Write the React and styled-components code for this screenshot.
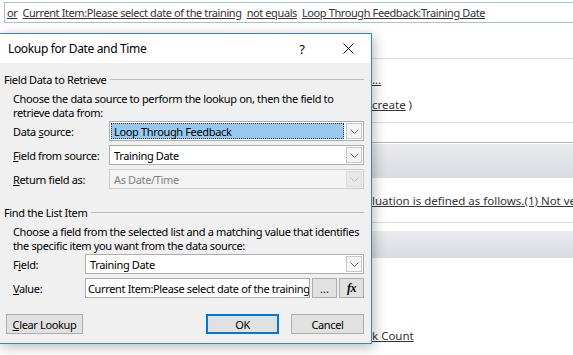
import styled, { createGlobalStyle } from "styled-components";

const FONT = `"Noto Sans", "Open Sans", sans-serif`;

const GlobalStyle = createGlobalStyle`
  html, body {
    margin: 0;
    padding: 0;
    background: #ffffff;
    overflow: hidden;
  }
  body {
    font-family: ${FONT};
    font-size: 11px;
    letter-spacing: -0.35px;
    color: #000;
  }
`;

// Background page (the workflow editor behind the dialog)
const Page = styled.div`
  position: relative;
  width: 573px;
  height: 355px;
  overflow: hidden;
  background: #fff;
`;

const ConditionBar = styled.div`
  margin: 2px 0 0 4px;
  height: 19px;
  border: 1px solid #a9bfd6;
  border-right: none;
  padding-left: 2px;
  display: flex;
  align-items: center;
  gap: 5px;
  font-size: 11px;
  letter-spacing: -0.4px;
  color: #333;
  white-space: nowrap;
`;

const Link = styled.span`
  text-decoration: underline;
  color: #333;
`;

const Divider = styled.div`
  height: 1px;
  margin-top: ${(p) => p.$top}px;
  background: ${(p) => (p.$dark ? "#b4b4b4" : "#dadada")};
`;

const Band = styled.div`
  height: ${(p) => p.$h}px;
  margin-top: ${(p) => p.$top}px;
  background: linear-gradient(#e9ebee, #d9dce1);
  border-top: 1px solid #fff;
`;

const BgRow = styled.div`
  display: grid;
  grid-template-columns: 372px minmax(0, 1fr);
  height: 20px;
  line-height: 20px;
  margin-top: ${(p) => p.$top}px;
  font-size: 11.5px;
  letter-spacing: 0;
  color: #333;
  white-space: nowrap;
`;

const Hidden = styled.div`
  overflow: hidden;
  text-align: right;
`;

const Shown = styled.div`
  overflow: hidden;
`;

// Dialog window
const Window = styled.div`
  position: absolute;
  left: -1px;
  top: 33px;
  width: 371px;
  height: 309px;
  border: 1px solid #2b86d6;
  background: #f0f0f0;
  box-shadow: 2px 3px 12px rgba(0, 0, 0, 0.28);
  display: flex;
  flex-direction: column;
`;

const TitleBar = styled.div`
  height: 29px;
  background: #fff;
  display: flex;
  align-items: center;
  padding-left: 8px;
  font-size: 12px;
`;

const Title = styled.div`
  flex: 1;
`;

const TitleButton = styled.div`
  width: 46px;
  height: 29px;
  display: flex;
  align-items: center;
  justify-content: center;
  font-size: 13px;
`;

const Body = styled.div`
  padding: 8px 7px 8px 4px;
  display: flex;
  flex-direction: column;
`;

const GroupHeader = styled.div`
  display: flex;
  align-items: center;
  gap: 4px;
  height: 16px;
  margin-top: ${(p) => p.$top || 0}px;
  white-space: nowrap;

  &::after {
    content: "";
    flex: 1;
    height: 1px;
    background: #bcbcbc;
  }
`;

const Hint = styled.div`
  margin: 5px 0 1px 9px;
  line-height: 14px;
  white-space: nowrap;
`;

const FormGrid = styled.div`
  display: grid;
  grid-template-columns: ${(p) => p.$label}px minmax(0, 1fr);
  row-gap: 4px;
  align-items: center;
  padding-left: 9px;
`;

const Label = styled.div`
  white-space: nowrap;
`;

const Combo = styled.div`
  height: 20px;
  box-sizing: border-box;
  border: 1px solid ${(p) => (p.$disabled ? "#cccccc" : "#adadad")};
  background: ${(p) => (p.$disabled ? "#f4f4f4" : "#fff")};
  display: flex;
  align-items: stretch;
  color: ${(p) => (p.$disabled ? "#838383" : "#000")};
`;

const ComboText = styled.div`
  flex: 1;
  min-width: 0;
  display: flex;
  align-items: center;
  padding-left: 3px;
  margin: 1px;
  white-space: nowrap;
  overflow: hidden;
  background: ${(p) => (p.$selected ? "#99c9ef" : "transparent")};
  outline: ${(p) => (p.$selected ? "1px dotted #333" : "none")};
  outline-offset: -1px;
`;

const DropButton = styled.div`
  width: 16px;
  margin: 1px;
  box-sizing: border-box;
  border: 1px solid ${(p) => (p.$disabled ? "#dadada" : "#c8c8c8")};
  background: ${(p) => (p.$disabled ? "#e8e8e8" : "#f6f6f6")};
  display: flex;
  align-items: center;
  justify-content: center;
`;

const ValueRow = styled.div`
  display: flex;
  gap: 2px;
  height: 20px;
  min-width: 0;
`;

const TextBox = styled.div`
  flex: 1;
  min-width: 0;
  box-sizing: border-box;
  border: 1px solid #adadad;
  background: #fff;
  padding-left: 2px;
  display: flex;
  align-items: center;
  white-space: nowrap;
  overflow: hidden;
`;

const SmallButton = styled.div`
  width: 25px;
  flex: none;
  box-sizing: border-box;
  border: 1px solid #adadad;
  background: #e1e1e1;
  display: flex;
  align-items: center;
  justify-content: center;
  font-family: ${(p) => (p.$serif ? `"Liberation Serif", serif` : FONT)};
  font-style: ${(p) => (p.$serif ? "italic" : "normal")};
  font-weight: ${(p) => (p.$serif ? 700 : 400)};
  font-size: ${(p) => (p.$serif ? 12 : 11)}px;
  letter-spacing: ${(p) => (p.$serif ? "-0.5px" : "0")};
`;

const Footer = styled.div`
  display: flex;
  align-items: center;
  margin-top: 16px;
  padding-left: 2px;
  gap: 12px;
`;

const Button = styled.div`
  width: ${(p) => p.$w}px;
  height: 20px;
  box-sizing: border-box;
  border: ${(p) => (p.$primary ? "2px solid #0078d7" : "1px solid #adadad")};
  background: #e1e1e1;
  display: flex;
  align-items: center;
  justify-content: center;
  white-space: nowrap;
`;

const Spacer = styled.div`
  flex: 1;
`;

const Chevron = ({ disabled }) => (
  <svg width="9" height="5" viewBox="0 0 9 5">
    <polyline
      points="0.5,0.5 4.5,4.5 8.5,0.5"
      fill="none"
      stroke={disabled ? "#bdbdbd" : "#606060"}
      strokeWidth="1"
    />
  </svg>
);

const CloseIcon = () => (
  <svg width="11" height="11" viewBox="0 0 11 11">
    <path d="M0.5 0.5 L10.5 10.5 M10.5 0.5 L0.5 10.5" stroke="#000" strokeWidth="1" />
  </svg>
);

function Select({ value, selected, disabled }) {
  return (
    <Combo $disabled={disabled}>
      <ComboText $selected={selected}>{value}</ComboText>
      <DropButton $disabled={disabled}>
        <Chevron disabled={disabled} />
      </DropButton>
    </Combo>
  );
}

export default function App() {
  return (
    <Page>
      <GlobalStyle />
      <ConditionBar>
        <Link>or</Link>
        <Link>Current Item:Please select date of the training</Link>
        <Link>not equals</Link>
        <Link>Loop Through Feedback:Training Date</Link>
      </ConditionBar>

      <Divider $top={35} />
      <BgRow $top={11}>
        <Hidden>
          <Link>Set variable</Link>
        </Hidden>
        <Shown>
          <Link>...</Link>
        </Shown>
      </BgRow>
      <BgRow $top={5}>
        <Hidden>
          (<Link>Output to Variable: </Link>
        </Hidden>
        <Shown>
          <Link>create</Link> )
        </Shown>
      </BgRow>
      <Divider $top={7} />
      <Divider $top={19} $dark />
      <Band $h={34} $top={0} />
      <BgRow $top={13}>
        <Hidden>
          <Link>Eva</Link>
        </Hidden>
        <Shown>
          <Link>luation is defined as follows.(1) Not verified (2) Verified</Link>
        </Shown>
      </BgRow>
      <Divider $top={11} />
      <Band $h={27} $top={7} />
      <BgRow $top={68}>
        <Hidden>
          <Link>Feedbac</Link>
        </Hidden>
        <Shown>
          <Link>k Count</Link>
        </Shown>
      </BgRow>

      <Window>
        <TitleBar>
          <Title>Lookup for Date and Time</Title>
          <TitleButton>?</TitleButton>
          <TitleButton>
            <CloseIcon />
          </TitleButton>
        </TitleBar>
        <Body>
          <GroupHeader>Field Data to Retrieve</GroupHeader>
          <Hint>
            Choose the data source to perform the lookup on, then the field to
            <br />
            retrieve data from:
          </Hint>
          <FormGrid $label={96}>
            <Label>
              Data <u>s</u>ource:
            </Label>
            <Select value="Loop Through Feedback" selected />
            <Label>
              <u>F</u>ield from source:
            </Label>
            <Select value="Training Date" />
            <Label>
              <u>R</u>eturn field as:
            </Label>
            <Select value="As Date/Time" disabled />
          </FormGrid>

          <GroupHeader $top={15}>Find the List Item</GroupHeader>
          <Hint>
            Choose a field from the selected list and a matching value that identifies
            <br />
            the specific item you want from the data source:
          </Hint>
          <FormGrid $label={72}>
            <Label>
              F<u>i</u>eld:
            </Label>
            <Select value="Training Date" />
            <Label>
              <u>V</u>alue:
            </Label>
            <ValueRow>
              <TextBox>Current Item:Please select date of the training</TextBox>
              <SmallButton>...</SmallButton>
              <SmallButton $serif>fx</SmallButton>
            </ValueRow>
          </FormGrid>

          <Footer>
            <Button $w={77}>
              <u>C</u>lear Lookup
            </Button>
            <Spacer />
            <Button $w={73} $primary>
              OK
            </Button>
            <Button $w={73}>Cancel</Button>
          </Footer>
        </Body>
      </Window>
    </Page>
  );
}
